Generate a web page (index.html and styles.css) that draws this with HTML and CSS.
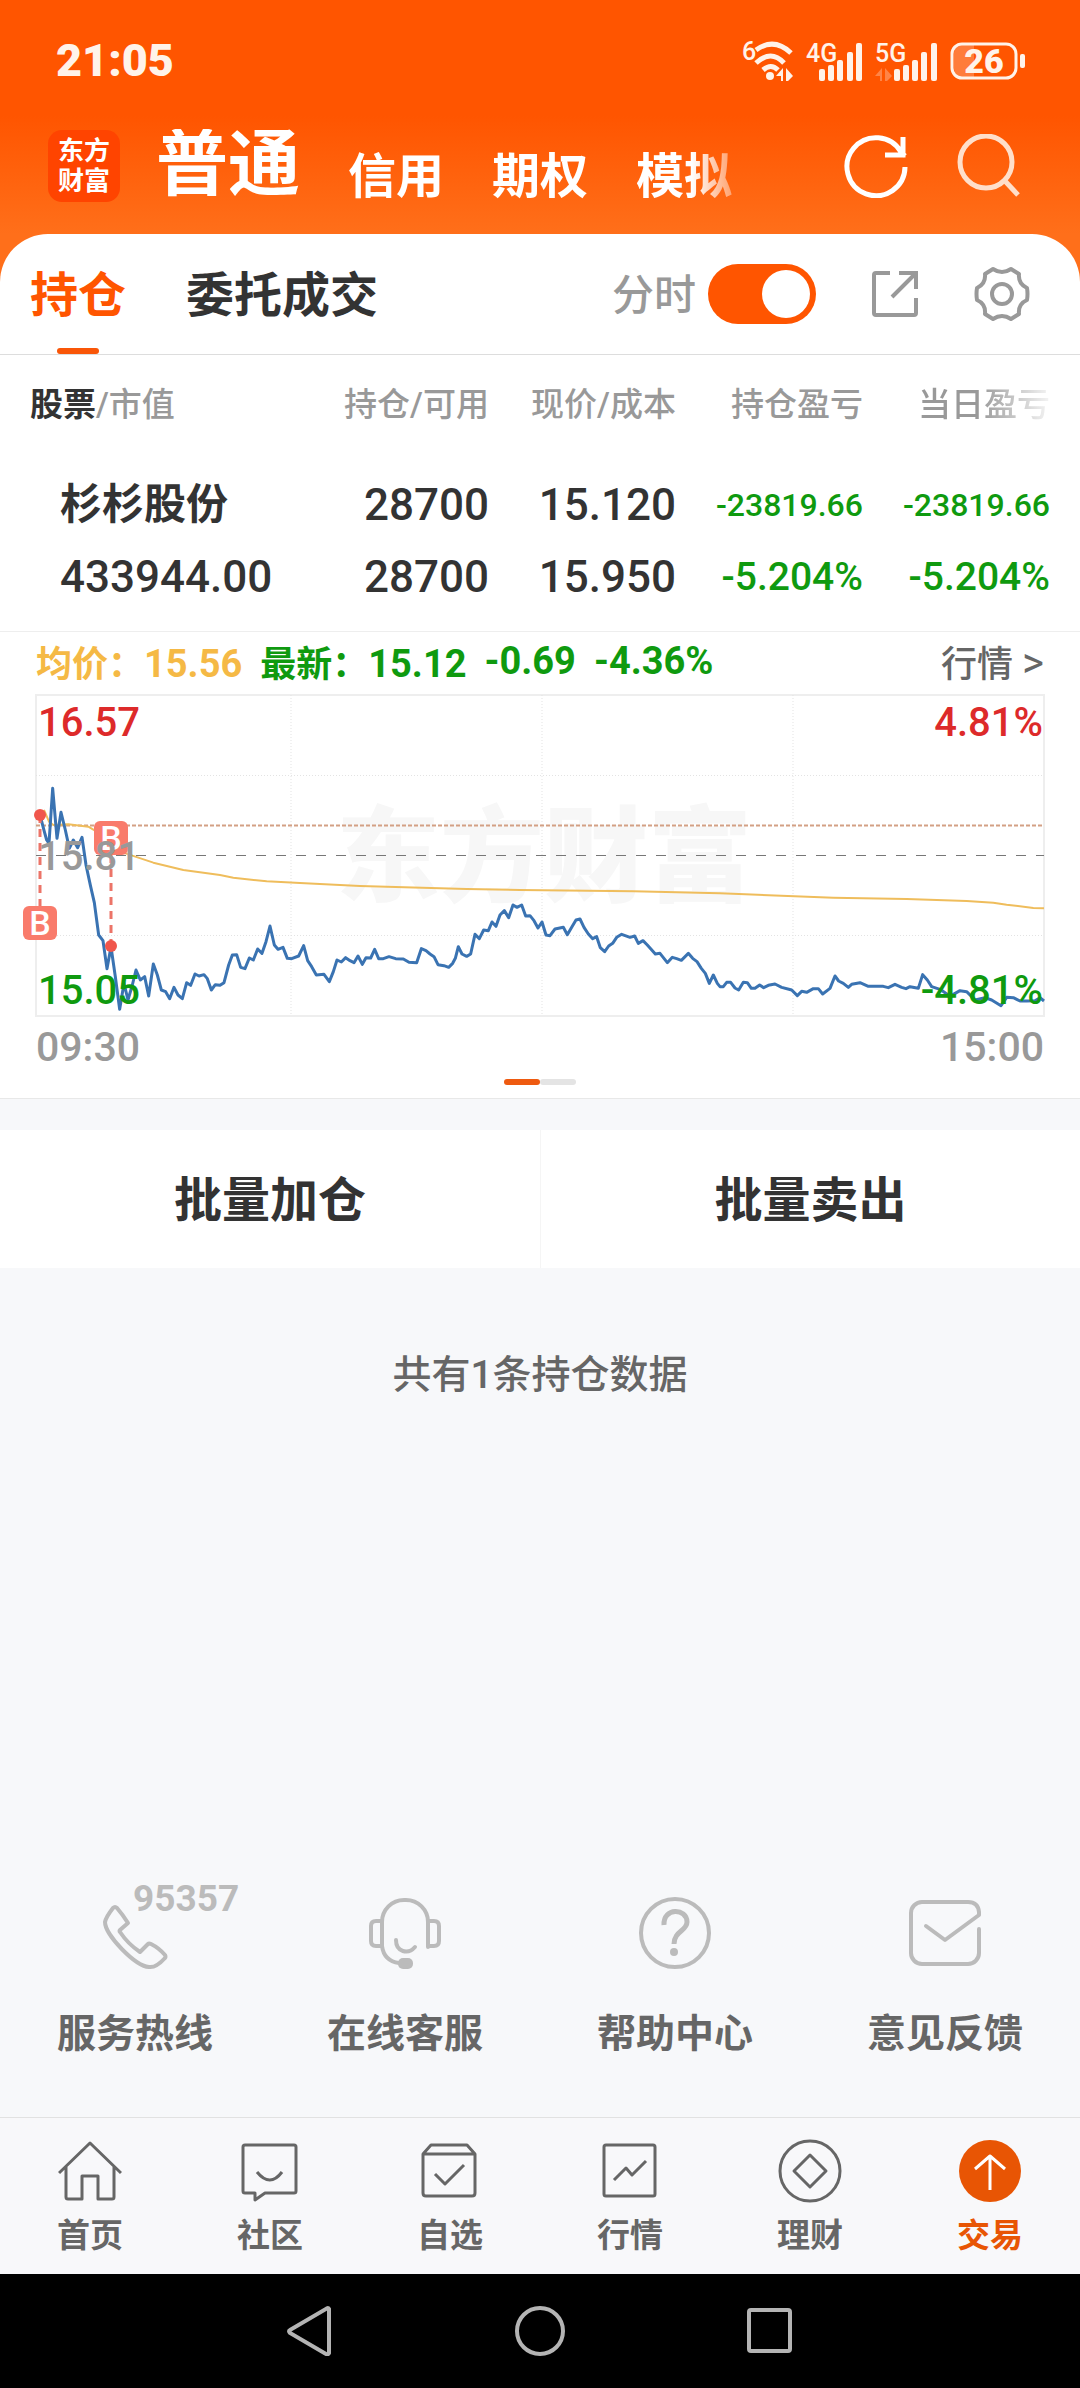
FILE: index.html
```html
<!DOCTYPE html>
<html lang="zh-CN">
<head>
<meta charset="utf-8">
<meta name="viewport" content="width=device-width, initial-scale=1">
<title>东方财富 - 交易</title>
<link rel="stylesheet" href="styles.css">
</head>
<body>
<div class="status-bar">
  <span class="clock">21:05</span>
  <div class="status-icons">
    <svg width="52" height="44" viewBox="0 0 52 44" fill="none" stroke="currentColor" stroke-width="5">
      <text class="net-label" x="0" y="22">6</text>
      <path d="M14 12Q32 -1 49 15M14 25Q29 11 42 25M21 32Q29 25 36 32"/>
      <circle cx="28" cy="38" r="4" fill="currentColor" stroke="none"/>
      <path d="M41 30v13h-2v-5h-5zM44 30l7 8-5 5h-2z" fill="currentColor" stroke="none"/>
    </svg>
    <svg width="57" height="44" viewBox="0 0 57 44" fill="currentColor">
      <text class="net-label" x="0" y="24">4G</text>
      <rect x="13" y="31" width="6" height="12" rx="2"/><rect x="22" y="27" width="6" height="16" rx="2"/><rect x="31" y="22" width="6" height="21" rx="2"/><rect x="41" y="14" width="6" height="29" rx="2"/><rect x="50" y="5" width="6" height="38" rx="2"/>
    </svg>
    <svg width="63" height="44" viewBox="0 0 63 44" fill="currentColor">
      <text class="net-label" x="0" y="24">5G</text>
      <path d="M7 30v13H5v-5H0zM10 30l7 8-5 5h-2z" opacity=".3"/>
      <rect x="19" y="31" width="6" height="12" rx="2"/><rect x="28" y="27" width="6" height="16" rx="2"/><rect x="37" y="22" width="6" height="21" rx="2"/><rect x="46" y="14" width="6" height="29" rx="2"/><rect x="56" y="5" width="6" height="38" rx="2"/>
    </svg>
    <svg width="76" height="44" viewBox="0 0 76 44" fill="currentColor">
      <path d="M24 7H12a8 8 0 0 0-8 8v16a8 8 0 0 0 8 8h12z" opacity=".25"/>
      <rect x="2" y="6" width="64" height="34" rx="10" fill="none" stroke="currentColor" stroke-width="3"/>
      <rect x="70" y="16" width="5" height="14" rx="2"/>
      <text class="battery-label" x="34" y="35" text-anchor="middle">26</text>
    </svg>
  </div>
</div>

<header class="top-bar">
  <a class="logo" href="#"><span>东方</span><span>财富</span></a>
  <nav class="accounts">
    <a class="active" href="#">普通</a><a href="#">信用</a><a href="#">期权</a><a href="#">模拟</a>
  </nav>
  <div class="top-actions">
    <button aria-label="刷新"><svg width="64" height="64" viewBox="0 0 64 64" fill="none" stroke="currentColor" stroke-width="5"><path d="M61 33A29 29 0 1 1 57 18L61 22M59 3V21H41"/></svg></button>
    <button class="soft" aria-label="搜索"><svg width="64" height="64" viewBox="0 0 64 64" fill="none" stroke="currentColor" stroke-width="5"><circle cx="30" cy="28" r="26"/><path d="M49 47L62 61"/></svg></button>
  </div>
</header>

<main>
  <section class="card">
    <div class="tabs">
      <a class="tab active" href="#">持仓</a>
      <a class="tab" href="#">委托成交</a>
      <label class="switch"><span>分时</span><input type="checkbox" role="switch" checked></label>
      <button aria-label="分享"><svg width="48" height="48" viewBox="0 0 48 48" fill="none" stroke="currentColor" stroke-width="4"><path d="M19 3H5Q3 3 3 5V43Q3 45 5 45H43Q45 45 45 43V28M28 3H45V19M45 3L21 27"/></svg></button>
      <button aria-label="设置"><svg width="56" height="56" viewBox="0 0 56 56" fill="none" stroke="currentColor" stroke-width="4" stroke-linejoin="round"><path d="M19 3Q28 9 37 3L45 8Q44 18 53 22Q54 28 53 34Q44 38 45 48L37 53Q28 47 19 53L11 48Q12 38 3 34Q2 28 3 22Q12 18 11 8Z"/><circle cx="28" cy="28" r="10"/></svg></button>
    </div>

    <div class="positions">
      <table>
        <thead>
          <tr><th><b>股票</b>/市值</th><th>持仓/可用</th><th>现价/成本</th><th>持仓盈亏</th><th class="fade">当日盈亏</th></tr>
        </thead>
        <tbody>
          <tr><td class="name">杉杉股份</td><td>28700</td><td>15.120</td><td class="down small">-23819.66</td><td class="down small">-23819.66</td></tr>
          <tr><td>433944.00</td><td>28700</td><td>15.950</td><td class="down">-5.204%</td><td class="down">-5.204%</td></tr>
        </tbody>
      </table>
    </div>

    <div class="quote">
      <span class="avg">均价：<span class="num">15.56</span></span>
      <span class="last">最新：<span class="num">15.12</span></span>
      <span class="last num">-0.69</span>
      <span class="last num">-4.36%</span>
      <a href="#">行情 <span class="more">&gt;</span></a>
    </div>

    <svg class="chart" viewBox="0 12 1080 328" role="img" aria-label="分时走势">
      <text class="watermark" x="544" y="214">东方财富</text>
      <g class="grid">
        <rect x="36" y="15" width="1008" height="321"/>
        <path class="dots" d="M36 95.500H1044M36 255.500H1044M291 15V336M542 15V336M793 15V336"/>
      </g>
      <path class="cost" d="M36 145.500H1042"/>
      <path class="base" d="M36 175.500H1044"/>
      <g class="lines" transform="scale(.33333)">
        <polyline class="avg-line" points="120,405 133,392 147,425 160,435 205,433 265,440 290,455 330,490 360,515 397,527 460,548 550,570 660,585 700,593 800,604 900,609 1080,618 1400,627 1560,630 1900,634 2160,640 2500,653 2720,657 2900,663 2980,668 3020,674 3100,684 3132,685"/>
        <polyline class="price-line" points="120,405 133,455 140,480 147,490 158,325 171,475 183,397 196,450 208,505 220,480 233,503 246,472 258,555 272,620 283,668 296,765 309,782 321,866 333,800 346,890 359,988 372,910 384,960 397,915 408,870 421,900 434,890 446,948 460,852 472,885 484,930 497,935 509,956 522,922 534,945 547,956 560,908 572,916 585,882 597,888 612,884 622,896 634,930 646,914 660,916 672,908 686,855 697,825 710,824 722,862 735,866 748,834 760,840 773,807 786,820 798,785 810,738 823,795 834,808 849,802 862,835 875,836 896,828 911,797 923,842 935,860 949,885 972,883 988,905 1000,875 1011,840 1024,846 1037,833 1050,842 1062,848 1074,828 1087,853 1098,833 1112,834 1124,808 1136,836 1150,836 1167,830 1187,836 1210,837 1227,847 1250,848 1264,806 1278,812 1290,822 1302,830 1314,854 1332,857 1346,862 1358,850 1366,835 1375,800 1386,822 1400,829 1412,822 1425,763 1438,776 1451,750 1465,752 1476,726 1488,739 1500,705 1513,692 1526,713 1539,675 1551,682 1565,675 1577,708 1590,707 1602,722 1614,744 1626,726 1638,765 1650,767 1665,747 1690,742 1702,764 1716,740 1728,720 1740,717 1752,742 1765,762 1778,776 1790,770 1801,803 1814,815 1826,798 1838,790 1850,772 1865,763 1890,772 1904,768 1915,790 1929,782 1942,795 1966,822 1980,820 2002,848 2017,832 2030,836 2044,841 2065,820 2078,835 2091,845 2104,865 2116,880 2128,910 2140,885 2152,910 2160,920 2170,920 2180,907 2192,907 2205,924 2216,930 2230,907 2242,908 2254,925 2265,925 2279,915 2291,923 2305,916 2325,912 2345,922 2375,930 2392,947 2405,934 2420,937 2440,926 2455,926 2468,942 2490,925 2505,888 2516,903 2530,910 2545,922 2555,913 2580,908 2605,919 2650,919 2665,923 2685,913 2705,922 2718,926 2730,920 2755,925 2768,884 2782,900 2795,920 2820,928 2845,945 2860,943 2880,932 2900,935 2925,960 2955,953 2975,960 3003,977 3020,952 3040,953 3060,963 3080,963 3105,962 3120,953 3132,963"/>
      </g>
      <g class="buys">
        <path d="M40 135V228M111 175V266"/>
        <circle cx="40" cy="135" r="6"/><circle cx="111" cy="266" r="6"/>
        <rect x="23" y="226" width="34" height="34" rx="6"/><rect x="94" y="141" width="34" height="34" rx="6"/>
        <text x="40" y="255">B</text><text x="111" y="170">B</text>
      </g>
      <g class="axis">
        <text class="up" x="38" y="56">16.57</text>
        <text class="up end" x="1043" y="56">4.81%</text>
        <text class="mid" x="38" y="190">15.81</text>
        <text class="down" x="38" y="324">15.05</text>
        <text class="down end" x="1043" y="324">-4.81%</text>
      </g>
    </svg>
    <div class="times"><span>09:30</span><span>15:00</span></div>
    <div class="pager"><i class="on"></i><i></i></div>
  </section>

  <div class="batch"><button>批量加仓</button><button>批量卖出</button></div>
  <p class="count">共有1条持仓数据</p>

  <nav class="services">
    <a href="#"><span class="icon"><svg width="72" height="72" viewBox="0 0 72 72"><path d="M14 11Q16 9 18 11Q24 18 29 26L21 33Q20 34 21 35Q29 47 41 55L49 47Q50 46 52 47Q60 51 66 58Q67 60 66 61Q57 71 50 70C36 69 6 38 6 25Q7 20 14 11Z"/></svg><span class="hotline">95357</span></span>服务热线</a>
    <a href="#"><span class="icon"><svg width="72" height="72" viewBox="0 0 72 72"><path d="M59 50V25A22 22 0 0 0 37 3H35A22 22 0 0 0 13 25V49Q15 64 30 66M13 24H7Q2 24 2 29V44Q2 49 7 49H13M59 24H65Q70 24 70 29V44Q70 49 65 49H59M27 43C27 55 39 58 46 50"/><rect class="solid" x="29" y="61" width="15" height="11" rx="5"/></svg></span>在线客服</a>
    <a href="#"><span class="icon"><svg width="72" height="72" viewBox="0 0 72 72"><circle cx="36" cy="36" r="34"/><path class="butt" d="M25 28C24 10 48 11 48 25C48 34 35 34 35 47"/><circle class="solid" cx="35" cy="55" r="4"/></svg></span>帮助中心</a>
    <a href="#"><span class="icon"><svg width="72" height="72" viewBox="0 0 72 72"><path d="M70 32V56A11 11 0 0 1 59 67H13A11 11 0 0 1 2 56V16A11 11 0 0 1 13 5H59Q69 5 70 15V18L36 43L17 29"/></svg></span>意见反馈</a>
  </nav>
</main>

<nav class="bottom-nav">
  <a href="#"><svg width="64" height="64" viewBox="0 0 64 64"><path d="M1 34L32 4L63 34M8 28V58Q8 60 10 60H24V37H40V60H54Q56 60 56 58V28"/></svg>首页</a>
  <a href="#"><svg width="64" height="64" viewBox="0 0 64 64"><path d="M7 6H56Q58 6 58 8V52Q58 54 56 54H27L17 61V54H7Q5 54 5 52V8Q5 6 7 6ZM19 33Q32 49 44 33"/></svg>社区</a>
  <a href="#"><svg width="64" height="64" viewBox="0 0 64 64"><path d="M5 15V54Q5 57 8 57H54Q57 57 57 54V15ZM5 15L13 6H49L57 15M17 35L27 45L46 26"/></svg>自选</a>
  <a href="#"><svg width="64" height="64" viewBox="0 0 64 64"><rect x="6" y="6" width="51" height="51" rx="2"/><path d="M16 41L28 29L34 36L48 22"/></svg>行情</a>
  <a href="#"><svg width="64" height="64" viewBox="0 0 64 64"><circle cx="32" cy="32" r="30"/><path d="M32 16L48 32L32 48L16 32Z"/></svg>理财</a>
  <a class="active" href="#"><svg width="64" height="64" viewBox="0 0 64 64"><circle cx="32" cy="32" r="31"/><path d="M32 51V18M17 30L32 17L47 30"/></svg>交易</a>
</nav>

<div class="system-nav">
  <button aria-label="返回"><svg width="50" height="50" viewBox="0 0 50 50"><path d="M44 3Q43 1 41 3L5 24Q3 25 5 27L41 48Q43 49 44 47Z"/></svg></button>
  <button aria-label="主屏幕"><svg width="50" height="50" viewBox="0 0 50 50"><circle cx="25" cy="25" r="23"/></svg></button>
  <button aria-label="最近任务"><svg width="50" height="50" viewBox="0 0 50 50"><rect x="4" y="4" width="41" height="41" rx="2"/></svg></button>
</div>
</body>
</html>
```

FILE: styles.css
```css
* { box-sizing: border-box; }

body {
  margin: 0;
  min-height: 100vh;
  display: flex;
  flex-direction: column;
  background: #f7f8fa linear-gradient(#ff5500 116px, #ff6f1a 234px, #ff6f1a 300px, transparent 300px) no-repeat;
  color: #333;
  font-family: Roboto, "Noto Sans CJK SC", sans-serif;
  font-weight: 500;
}

a { color: inherit; text-decoration: none; }

button {
  margin: 0;
  padding: 0;
  border: 0;
  background: none;
  color: inherit;
  font: inherit;
}

svg { display: block; flex: none; }

/* Phone status bar */
.status-bar {
  display: flex;
  align-items: center;
  justify-content: space-between;
  height: 120px;
  padding: 0 54px 0 56px;
  color: #fff3ea;
}
.clock { font-size: 45px; font-weight: 900; }
.status-icons { display: flex; gap: 12px; }
.status-icons svg { overflow: visible; }
.net-label { font-size: 25px; font-weight: 500; fill: currentColor; stroke: none; }
.battery-label { font-size: 34px; font-weight: 900; }

/* Account switcher */
.top-bar {
  display: flex;
  align-items: center;
  height: 114px;
  padding: 0 60px 22px 48px;
  color: #fff;
}
.logo {
  display: flex;
  flex-direction: column;
  justify-content: center;
  align-items: center;
  width: 72px;
  height: 72px;
  border-radius: 14px;
  background: #ff4400;
  font-size: 26px;
  line-height: 30px;
  font-weight: 700;
}
.accounts {
  display: flex;
  align-items: flex-end;
  gap: 48px;
  margin: 0 0 2px 36px;
  font-size: 48px;
  font-weight: 700;
  line-height: 48px;
  white-space: nowrap;
  mask-image: linear-gradient(90deg, #000 93%, rgba(0, 0, 0, .4));
}
.accounts .active { font-size: 72px; line-height: 72px; }
.top-actions { display: flex; gap: 48px; margin-left: auto; }
.soft { color: #ffdfca; }

/* Positions card */
main { flex: 1; display: flex; flex-direction: column; }
.card {
  border-radius: 48px 48px 0 0;
  border-bottom: 1px solid #e8e8e8;
  background: #fff;
}
.tabs {
  display: flex;
  align-items: center;
  height: 121px;
  padding: 0 50px 0 30px;
  border-bottom: 1px solid #ddd;
  color: #999;
}
.tab {
  position: relative;
  margin-right: 60px;
  padding-bottom: 6px;
  color: #333;
  font-size: 48px;
  font-weight: 700;
}
.tab.active { color: #ff5500; }
.tab.active::after {
  content: "";
  position: absolute;
  left: 27px;
  right: 27px;
  bottom: -22px;
  height: 6px;
  border-radius: 3px;
  background: #f95608;
}
.switch {
  display: flex;
  align-items: center;
  gap: 12px;
  margin-left: auto;
  font-size: 42px;
}
.switch span { padding-bottom: 6px; }
.switch input {
  appearance: none;
  width: 108px;
  height: 60px;
  margin: 0;
  padding: 6px;
  border-radius: 30px;
  background: #ff5500;
}
.switch input::before {
  content: "";
  display: block;
  width: 48px;
  height: 48px;
  margin-left: auto;
  border-radius: 50%;
  background: #fff;
}
.tabs button { margin-left: 55px; }

.positions { padding: 0 30px 18px; border-bottom: 1px solid #eee; }
.positions table {
  width: 100%;
  border-collapse: collapse;
  table-layout: fixed;
  text-align: right;
  white-space: nowrap;
}
.positions th {
  height: 114px;
  padding: 0 0 20px;
  color: #999;
  font-size: 33px;
  font-weight: 500;
}
.positions th:first-child { width: 27%; text-align: left; }
.positions th:nth-child(2) { width: 18%; }
.positions th b { color: #333; font-weight: 700; }
.positions .fade { mask-image: linear-gradient(90deg, #000 62%, rgba(0, 0, 0, .1)); }
.positions td { height: 72px; padding: 0; font-size: 44px; line-height: 60px; }
.positions td:first-child { padding-left: 30px; text-align: left; }
.positions .name { font-size: 42px; font-weight: 700; }
.down { color: #0f9a0f; }
.positions .down { font-size: 39px; }
.positions .small { font-size: 32px; }

.quote {
  display: flex;
  align-items: center;
  gap: 18px;
  height: 60px;
  padding: 0 36px 2px;
  font-size: 36px;
  font-weight: 700;
}
.num { font-size: 38px; }
.avg { color: #f5b945; }
.last { color: #0f9a0f; }
.quote a { margin-left: auto; color: #666; font-weight: 500; }
.more { font-size: 42px; font-weight: 400; }

/* Intraday chart */
.chart { width: 100%; height: auto; overflow: visible; }
.watermark {
  fill: #f7f7f7;
  font-size: 104px;
  font-weight: 900;
  text-anchor: middle;
}
.grid { fill: none; stroke: #eee; stroke-width: 2; }
.dots { stroke: #e3e3e3; stroke-width: 1; stroke-dasharray: 1 2; }
.cost { stroke: #d3a084; stroke-width: 2; stroke-dasharray: 4 2; }
.base { stroke: #777; stroke-width: 1; stroke-dasharray: 10 10; }
.lines { fill: none; stroke-linejoin: round; }
.avg-line { stroke: #efbd5c; stroke-width: 6; }
.price-line { stroke: #3a73b2; stroke-width: 9; }
.buys { fill: #f97b6b; }
.buys path { stroke: #ec7468; stroke-width: 3; stroke-dasharray: 8 6; }
.buys circle { fill: #f0564c; }
.buys text { fill: #fff; font-size: 34px; text-anchor: middle; }
.axis { font-size: 40px; }
.axis .up { fill: #dd2a2a; }
.axis .down { fill: #0f9a0f; }
.axis .mid { fill: #999; }
.axis .end { text-anchor: end; }

.times {
  display: flex;
  justify-content: space-between;
  padding: 0 36px;
  color: #999;
  font-size: 41px;
  line-height: 54px;
}
.pager { display: flex; justify-content: center; padding: 5px 0 13px; }
.pager i { width: 36px; height: 6px; border-radius: 3px; background: #e4e4e4; }
.pager .on { background: #ee5a10; }

.batch {
  display: grid;
  grid-template-columns: 1fr 1fr;
  margin-top: 31px;
  background: #fff;
}
.batch button { height: 138px; padding-bottom: 6px; font-size: 48px; font-weight: 700; }
.batch button + button { border-left: 1px solid #f5f5f5; }
.count {
  margin: 79px 0;
  color: #666;
  font-size: 39px;
  line-height: 56px;
  text-align: center;
}

/* Customer service links */
.services {
  display: grid;
  grid-template-columns: repeat(4, 1fr);
  margin-top: auto;
  padding-bottom: 59px;
  color: #666;
  font-size: 39px;
  font-weight: 700;
  line-height: 48px;
}
.services a { display: flex; flex-direction: column; align-items: center; gap: 41px; }
.icon { position: relative; color: #bbb; }
.icon svg {
  fill: none;
  stroke: currentColor;
  stroke-width: 4;
  stroke-linecap: round;
  stroke-linejoin: round;
  overflow: visible;
}
.icon .butt { stroke-linecap: butt; stroke-width: 5; }
.icon .solid { fill: currentColor; stroke: none; }
.hotline {
  position: absolute;
  left: 34px;
  top: -22px;
  font-size: 37px;
  line-height: 48px;
}

/* App and system navigation */
.bottom-nav {
  display: grid;
  grid-template-columns: repeat(6, 1fr);
  padding: 21px 0 18px;
  border-top: 1px solid #e2e2e2;
  background: #f8f8fa;
  color: #666;
  font-size: 33px;
  font-weight: 700;
  line-height: 40px;
}
.bottom-nav a { display: flex; flex-direction: column; align-items: center; gap: 13px; }
.bottom-nav svg { fill: none; stroke: currentColor; stroke-width: 3; stroke-linejoin: round; }
.bottom-nav .active { color: #e85504; }
.active circle { fill: currentColor; stroke: none; }
.active path { stroke: #fff; }

.system-nav {
  display: flex;
  align-items: center;
  justify-content: center;
  gap: 180px;
  height: 114px;
  background: #000;
  color: #b4b4b4;
}
.system-nav svg { fill: none; stroke: currentColor; stroke-width: 4; }
```
